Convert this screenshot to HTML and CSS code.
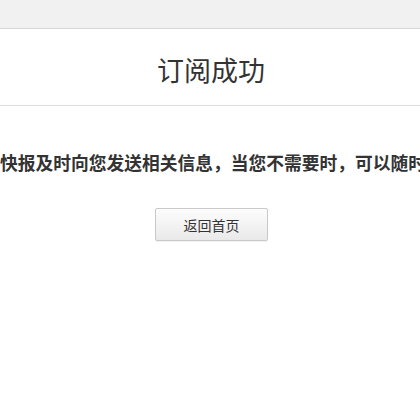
FILE: index.html
```html
<!DOCTYPE html>
<html lang="zh-CN">
<head>
    <meta charset="UTF-8">
    <meta name="viewport" content="width=device-width, initial-scale=1.0">
    <title>订阅成功</title>
    <link rel="stylesheet" href="styles.css">
</head>
<body>
    <div class="page">
        <div class="topbar"></div>
        <div class="header">
            <h1>订阅成功</h1>
        </div>
        <div class="notice">
            <p>我们会通过快报及时向您发送相关信息，当您不需要时，可以随时取消订阅。</p>
        </div>
        <div class="actions">
            <a class="btn" href="#">返回首页</a>
        </div>
    </div>
</body>
</html>
```

FILE: styles.css
```css
html, body {
    margin: 0;
    padding: 0;
    background-color: #fff;
}
body {
    font-family: "Noto Sans CJK SC", "Liberation Sans", sans-serif;
    color: #333;
}
.page {
    overflow: hidden;
    width: 420px;
    height: 420px;
}
.topbar {
    height: 28px;
    background-color: #f1f1f1;
    border-bottom: 1px solid #d8d8d8;
}
.header {
    height: 76px;
    border-bottom: 1px solid #dcdcdc;
    display: flex;
    justify-content: center;
    align-items: center;
}
.header h1 {
    margin: 6px 0 0 2px;
    font-size: 27px;
    font-weight: normal;
    line-height: 30px;
    color: #333;
}
.notice {
    display: flex;
    justify-content: center;
    padding-top: 44px;
}
.notice p {
    margin: 0;
    padding-left: 6px;
    flex: none;
    white-space: nowrap;
    font-size: 17.75px;
    font-weight: bold;
    line-height: 24px;
    color: #333;
}
.actions {
    display: flex;
    justify-content: center;
    margin-top: 34px;
    padding-left: 3px;
}
.btn {
    display: flex;
    justify-content: center;
    align-items: center;
    width: 111px;
    height: 31px;
    border: 1px solid #c9c9c9;
    border-radius: 2px;
    background: linear-gradient(#fdfdfd, #e9e9e9);
    box-shadow: 0 1px 1px rgba(0, 0, 0, 0.06);
    font-size: 14px;
    color: #333;
    text-decoration: none;
}
```
